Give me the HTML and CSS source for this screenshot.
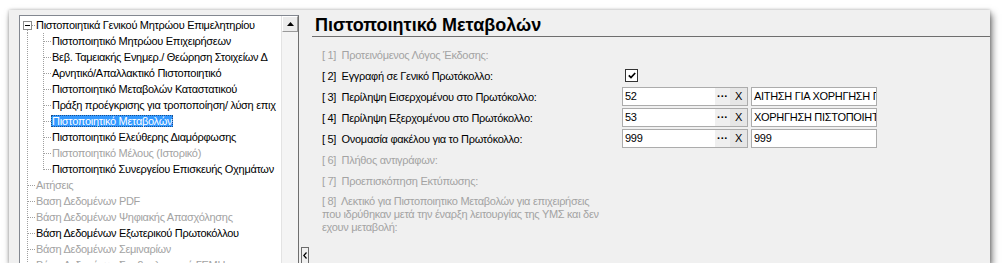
FILE: index.html
```html
<!DOCTYPE html>
<html lang="el">
<head>
    <meta charset="UTF-8">
    <title>Πιστοποιητικό Μεταβολών</title>
    <link rel="stylesheet" href="styles.css">
</head>
<body>

<div class="window">
    <div class="tree-pane">
        <div class="tree">
            <div class="node root">
                <svg class="toggle" width="9" height="9" viewBox="0 0 9 9"><rect x="0.5" y="0.5" width="8" height="8" fill="#fff" stroke="#8c8c8c"/><path d="M2 4.5h5" stroke="#000"/></svg><span class="label">Πιστοποιητικά Γενικού Μητρώου Επιμελητηρίου</span>
            </div>
            <div class="node child"><span class="label">Πιστοποιητικό Μητρώου Επιχειρήσεων</span></div>
            <div class="node child"><span class="label">Βεβ. Ταμειακής Ενημερ./ Θεώρηση Στοιχείων Δ</span></div>
            <div class="node child"><span class="label">Αρνητικό/Απαλλακτικό Πιστοποιητικό</span></div>
            <div class="node child"><span class="label">Πιστοποιητικό Μεταβολών Καταστατικού</span></div>
            <div class="node child"><span class="label">Πράξη προέγκρισης για τροποποίηση/ λύση επιχ</span></div>
            <div class="node child"><span class="label selected">Πιστοποιητικό Μεταβολών</span></div>
            <div class="node child"><span class="label">Πιστοποιητικό Ελεύθερης Διαμόρφωσης</span></div>
            <div class="node child off"><span class="label">Πιστοποιητικό Μέλους (Ιστορικό)</span></div>
            <div class="node child last"><span class="label">Πιστοποιητικό Συνεργείου Επισκευής Οχημάτων</span></div>
            <div class="node top off"><span class="label">Αιτήσεις</span></div>
            <div class="node top off"><span class="label">Βαση Δεδομένων PDF</span></div>
            <div class="node top off"><span class="label">Βάση Δεδομένων Ψηφιακής Απασχόλησης</span></div>
            <div class="node top"><span class="label">Βάση Δεδομένων Εξωτερικού Πρωτοκόλλου</span></div>
            <div class="node top off"><span class="label">Βάση Δεδομένων Σεμιναρίων</span></div>
            <div class="node top off"><span class="label">Βάση Δεδομένων Συμβουλευτικού ΓΕΜΗ</span></div>
        </div>
        <div class="vscroll">
            <div class="scroll-btn">
                <svg width="7" height="4" viewBox="0 0 7 4"><path d="M0 4L3.5 0L7 4Z" fill="#000"/></svg>
            </div>
        </div>
    </div>

    <div class="splitter">
        <span class="collapse">
            <svg width="4" height="7" viewBox="0 0 4 7"><path d="M3.5 0.5L0.8 3.5L3.5 6.5" fill="none" stroke="#000" stroke-width="1.2"/></svg>
        </span>
    </div>

    <div class="form">
        <h1 class="form-title">Πιστοποιητικό Μεταβολών</h1>
        <div class="fields">
            <div class="field off">
                <span class="label">[ 1]  Προτεινόμενος Λόγος Έκδοσης:</span>
            </div>
            <div class="field">
                <span class="label">[ 2]  Εγγραφή σε Γενικό Πρωτόκολλο:</span>
                <span class="check">
                    <svg width="8" height="7" viewBox="0 0 8 7"><path d="M0.8 3.3L3 5.6L7.2 1" fill="none" stroke="#000" stroke-width="1.7"/></svg>
                </span>
            </div>
            <div class="field">
                <span class="label">[ 3]  Περίληψη Εισερχομένου στο Πρωτόκολλο:</span>
                <div class="lookup"><span class="value">52</span><span class="dots">···</span><span class="clear">X</span></div>
                <div class="text-box">ΑΙΤΗΣΗ ΓΙΑ ΧΟΡΗΓΗΣΗ ΠΙΣΤΟΠΟΙΗΤΙΚΟΥ ΜΕΤΑΒΟΛΩΝ</div>
            </div>
            <div class="field">
                <span class="label">[ 4]  Περίληψη Εξερχομένου στο Πρωτόκολλο:</span>
                <div class="lookup"><span class="value">53</span><span class="dots">···</span><span class="clear">X</span></div>
                <div class="text-box">ΧΟΡΗΓΗΣΗ ΠΙΣΤΟΠΟΙΗΤΙΚΟΥ ΜΕΤΑΒΟΛΩΝ</div>
            </div>
            <div class="field">
                <span class="label">[ 5]  Ονομασία φακέλου για το Πρωτόκολλο:</span>
                <div class="lookup"><span class="value">999</span><span class="dots">···</span><span class="clear">X</span></div>
                <div class="text-box">999</div>
            </div>
            <div class="field off">
                <span class="label">[ 6]  Πλήθος αντιγράφων:</span>
            </div>
            <div class="field off">
                <span class="label">[ 7]  Προεπισκόπηση Εκτύπωσης:</span>
            </div>
            <div class="note off">[ 8]  Λεκτικό για Πιστοποιητικο Μεταβολών για επιχειρήσεις<br>που ιδρύθηκαν μετά την έναρξη λειτουργίας της ΥΜΣ και δεν<br>εχουν μεταβολή:</div>
        </div>
    </div>
</div>

</body>
</html>
```

FILE: styles.css
```css
body {
    margin: 0;
    background: #fff;
    font-family: "Liberation Sans", Arial, sans-serif;
    font-size: 11px;
    letter-spacing: -0.3px;
    color: #000;
}

.window {
    display: flex;
    width: 981px;
    height: 253px;
    margin: 10px 0 0 9px;
    padding: 5px 0 0 10px;
    box-sizing: border-box;
    background: #f0f0f0;
    overflow: hidden;
    box-shadow: 0 0 3px rgba(0, 0, 0, 0.25), 2px 4px 7px rgba(0, 0, 0, 0.55);
}

/* tree on the left */

.tree-pane {
    display: flex;
    width: 278px;
    flex: none;
    border: 1px solid #828790;
    border-right-color: #6f6f6f;
    border-bottom: none;
    background: #fff;
}

.tree {
    flex: 1;
    overflow: hidden;
    padding-top: 1px;
}

.node {
    height: 16px;
    line-height: 16px;
    white-space: nowrap;
    background-repeat: no-repeat;
}

.node .label {
    padding: 0 1px;
}

.node.off {
    color: #a3a3a3;
}

.node.root {
    padding-left: 3px;
    background-image:
        repeating-linear-gradient(#a0a0a0 0 1px, transparent 1px 2px),
        repeating-linear-gradient(90deg, #a0a0a0 0 1px, transparent 1px 2px);
    background-position: 7px 13px, 12px 8px;
    background-size: 1px 3px, 3px 1px;
}

.node.root .toggle {
    vertical-align: -1px;
    margin-right: 3px;
}

.node.child {
    padding-left: 31px;
    background-image:
        repeating-linear-gradient(#a0a0a0 0 1px, transparent 1px 2px),
        repeating-linear-gradient(#a0a0a0 0 1px, transparent 1px 2px),
        repeating-linear-gradient(90deg, #a0a0a0 0 1px, transparent 1px 2px);
    background-position: 7px 0, 23px 0, 24px 8px;
    background-size: 1px 16px, 1px 16px, 7px 1px;
}

.node.child.last {
    background-size: 1px 16px, 1px 9px, 7px 1px;
}

.node.top {
    padding-left: 15px;
    background-image:
        repeating-linear-gradient(#a0a0a0 0 1px, transparent 1px 2px),
        repeating-linear-gradient(90deg, #a0a0a0 0 1px, transparent 1px 2px);
    background-position: 7px 0, 8px 8px;
    background-size: 1px 16px, 7px 1px;
}

.label.selected {
    background: #3399ff;
    color: #fff;
    outline: 1px dotted #1c4f8c;
    outline-offset: -1px;
}

.vscroll {
    width: 16px;
    flex: none;
    background: #f4f4f4;
    border-left: 1px solid #e3e3e3;
}

.scroll-btn {
    display: flex;
    align-items: center;
    justify-content: center;
    height: 16px;
    box-sizing: border-box;
    background: #ececec;
    border: 1px solid;
    border-color: #fff #9a9a9a #9a9a9a #fff;
}

/* splitter */

.splitter {
    display: flex;
    flex-direction: column;
    justify-content: flex-end;
    width: 13px;
    flex: none;
}

.collapse {
    display: flex;
    align-items: center;
    justify-content: center;
    width: 8px;
    height: 16px;
    margin-left: 2px;
    box-sizing: border-box;
    border: 1px solid #6b6b6b;
    border-bottom: none;
}

/* form on the right */

.form {
    flex: 1;
}

.form-title {
    margin: 0;
    height: 21px;
    padding-left: 3px;
    font-size: 18px;
    font-weight: bold;
    letter-spacing: 0;
    line-height: 21px;
    border-bottom: 1px solid #6e6e6e;
}

.fields {
    padding: 7px 0 0 10px;
}

.field {
    display: flex;
    align-items: center;
    height: 21px;
}

.field .label {
    width: 300px;
    flex: none;
    white-space: pre;
}

.off {
    color: #a3a3a3;
}

.check {
    display: flex;
    align-items: center;
    justify-content: center;
    width: 13px;
    height: 13px;
    margin-left: 3px;
    box-sizing: border-box;
    border: 1px solid #333;
    background: #fff;
}

.lookup {
    display: flex;
    width: 126px;
    height: 19px;
    box-sizing: border-box;
    border: 1px solid #acacac;
    background: #fff;
    line-height: 17px;
}

.lookup .value {
    flex: 1;
    padding-left: 2px;
}

.lookup .dots {
    width: 15px;
    background: #efefef;
    font-weight: bold;
    letter-spacing: 0;
    text-align: center;
}

.lookup .clear {
    width: 17px;
    background: #e6e6e6;
    text-align: center;
}

.text-box {
    width: 126px;
    height: 19px;
    margin-left: 3px;
    padding-left: 2px;
    box-sizing: border-box;
    border: 1px solid #acacac;
    background: #fff;
    line-height: 17px;
    white-space: nowrap;
    overflow: hidden;
}

.note {
    margin-top: 4px;
    line-height: 13px;
    white-space: pre;
}
```
